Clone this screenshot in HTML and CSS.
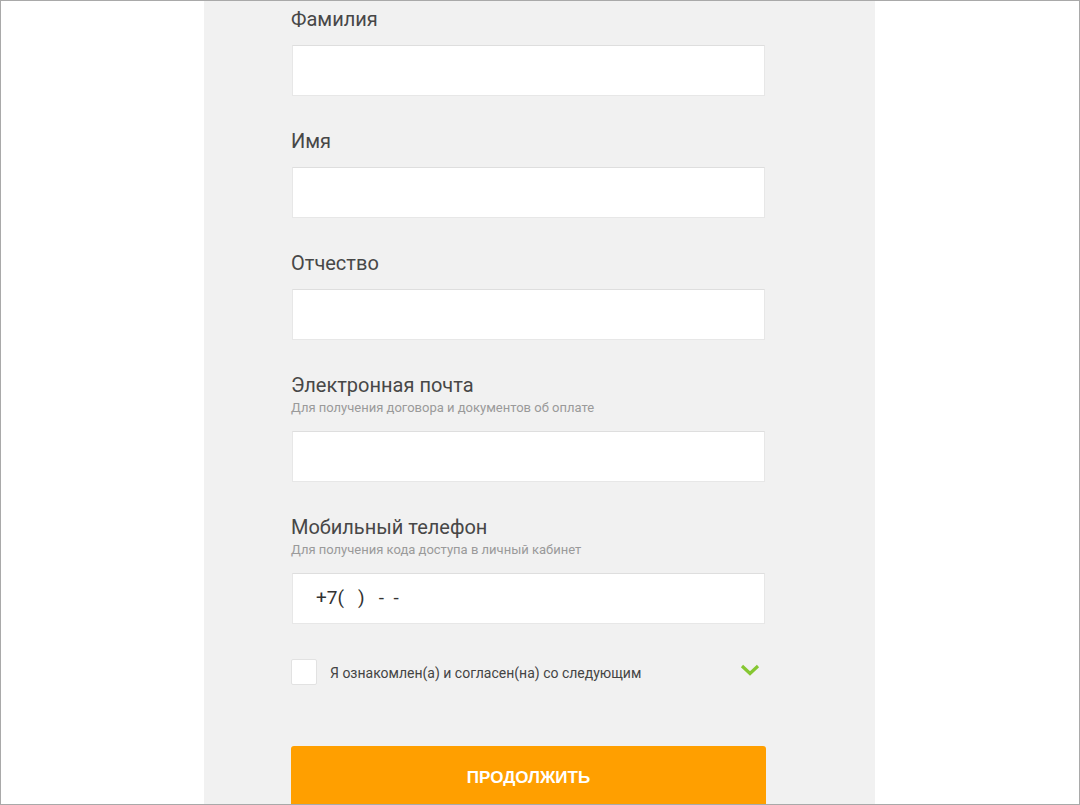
FILE: index.html
```html
<!DOCTYPE html>
<html lang="ru">
<head>
<meta charset="utf-8">
<link rel="stylesheet" href="styles.css">
</head>
<body>
<div class="frame">
  <div class="panel">
    <form class="form">
      <div class="group">
        <div class="label">Фамилия</div>
        <div class="input"></div>
      </div>
      <div class="group">
        <div class="label">Имя</div>
        <div class="input"></div>
      </div>
      <div class="group">
        <div class="label">Отчество</div>
        <div class="input"></div>
      </div>
      <div class="group">
        <div class="label">Электронная почта</div>
        <div class="hint">Для получения договора и документов об оплате</div>
        <div class="input"></div>
      </div>
      <div class="group">
        <div class="label">Мобильный телефон</div>
        <div class="hint">Для получения кода доступа в личный кабинет</div>
        <div class="input phone">+7(   )   -  -</div>
      </div>
      <div class="agree">
        <div class="checkbox"></div>
        <div class="agree-text">Я ознакомлен(а) и согласен(на) со следующим</div>
        <svg class="chevron" width="20" height="12" viewBox="0 0 20 12"><path d="M2 2 L10 9.5 L18 2" fill="none" stroke="#86c732" stroke-width="3.2"/></svg>
      </div>
      <div class="button">ПРОДОЛЖИТЬ</div>
    </form>
  </div>
</div>
</body>
</html>
```
FILE: styles.css
```css
html, body {
  margin: 0;
  padding: 0;
  background: #ffffff;
}
.frame {
  width: 1080px;
  height: 805px;
  box-sizing: border-box;
  border: 1px solid #a9a9a9;
  overflow: hidden;
  background: #ffffff;
}
.panel {
  margin-left: 203px;
  width: 671px;
  height: 100%;
  background: #f1f1f1;
  box-sizing: border-box;
  padding: 6px 0 0 87px;
}
.form {
  width: 475px;
  display: flex;
  flex-direction: column;
  font-family: Roboto, "Noto Sans", sans-serif;
}
.group {
  display: flex;
  flex-direction: column;
  margin-bottom: 33px;
}
.label {
  font-size: 20px;
  line-height: 24px;
  color: #474747;
}
.hint {
  font-size: 13px;
  line-height: 18px;
  margin-top: 2px;
  color: #9a9a9a;
}
.input {
  margin-top: 14px;
  margin-left: 1px;
  width: 473px;
  height: 51px;
  box-sizing: border-box;
  background: #ffffff;
  border: 1px solid #e7e7e7;
  border-top-color: #dedede;
}
.phone {
  font-size: 19px;
  color: #333333;
  padding-left: 23px;
  line-height: 48px;
  white-space: pre;
}
.agree {
  display: flex;
  align-items: center;
  margin-top: 2px;
  height: 26px;
}
.checkbox {
  width: 24px;
  height: 24px;
  background: #ffffff;
  border: 1px solid #e2e2e2;
  border-radius: 2px;
}
.agree-text {
  margin-left: 13px;
  font-size: 14px;
  color: #444444;
  flex: 1;
  padding-top: 1px;
}
.chevron {
  margin-right: 6px;
  margin-top: -5px;
}
.button {
  margin-top: 61px;
  height: 64px;
  background: #ff9f00;
  border-radius: 3px;
  color: #ffffff;
  font-family: "Liberation Sans", Arial, sans-serif;
  font-weight: bold;
  font-size: 17px;
  display: flex;
  align-items: center;
  justify-content: center;
}
```
